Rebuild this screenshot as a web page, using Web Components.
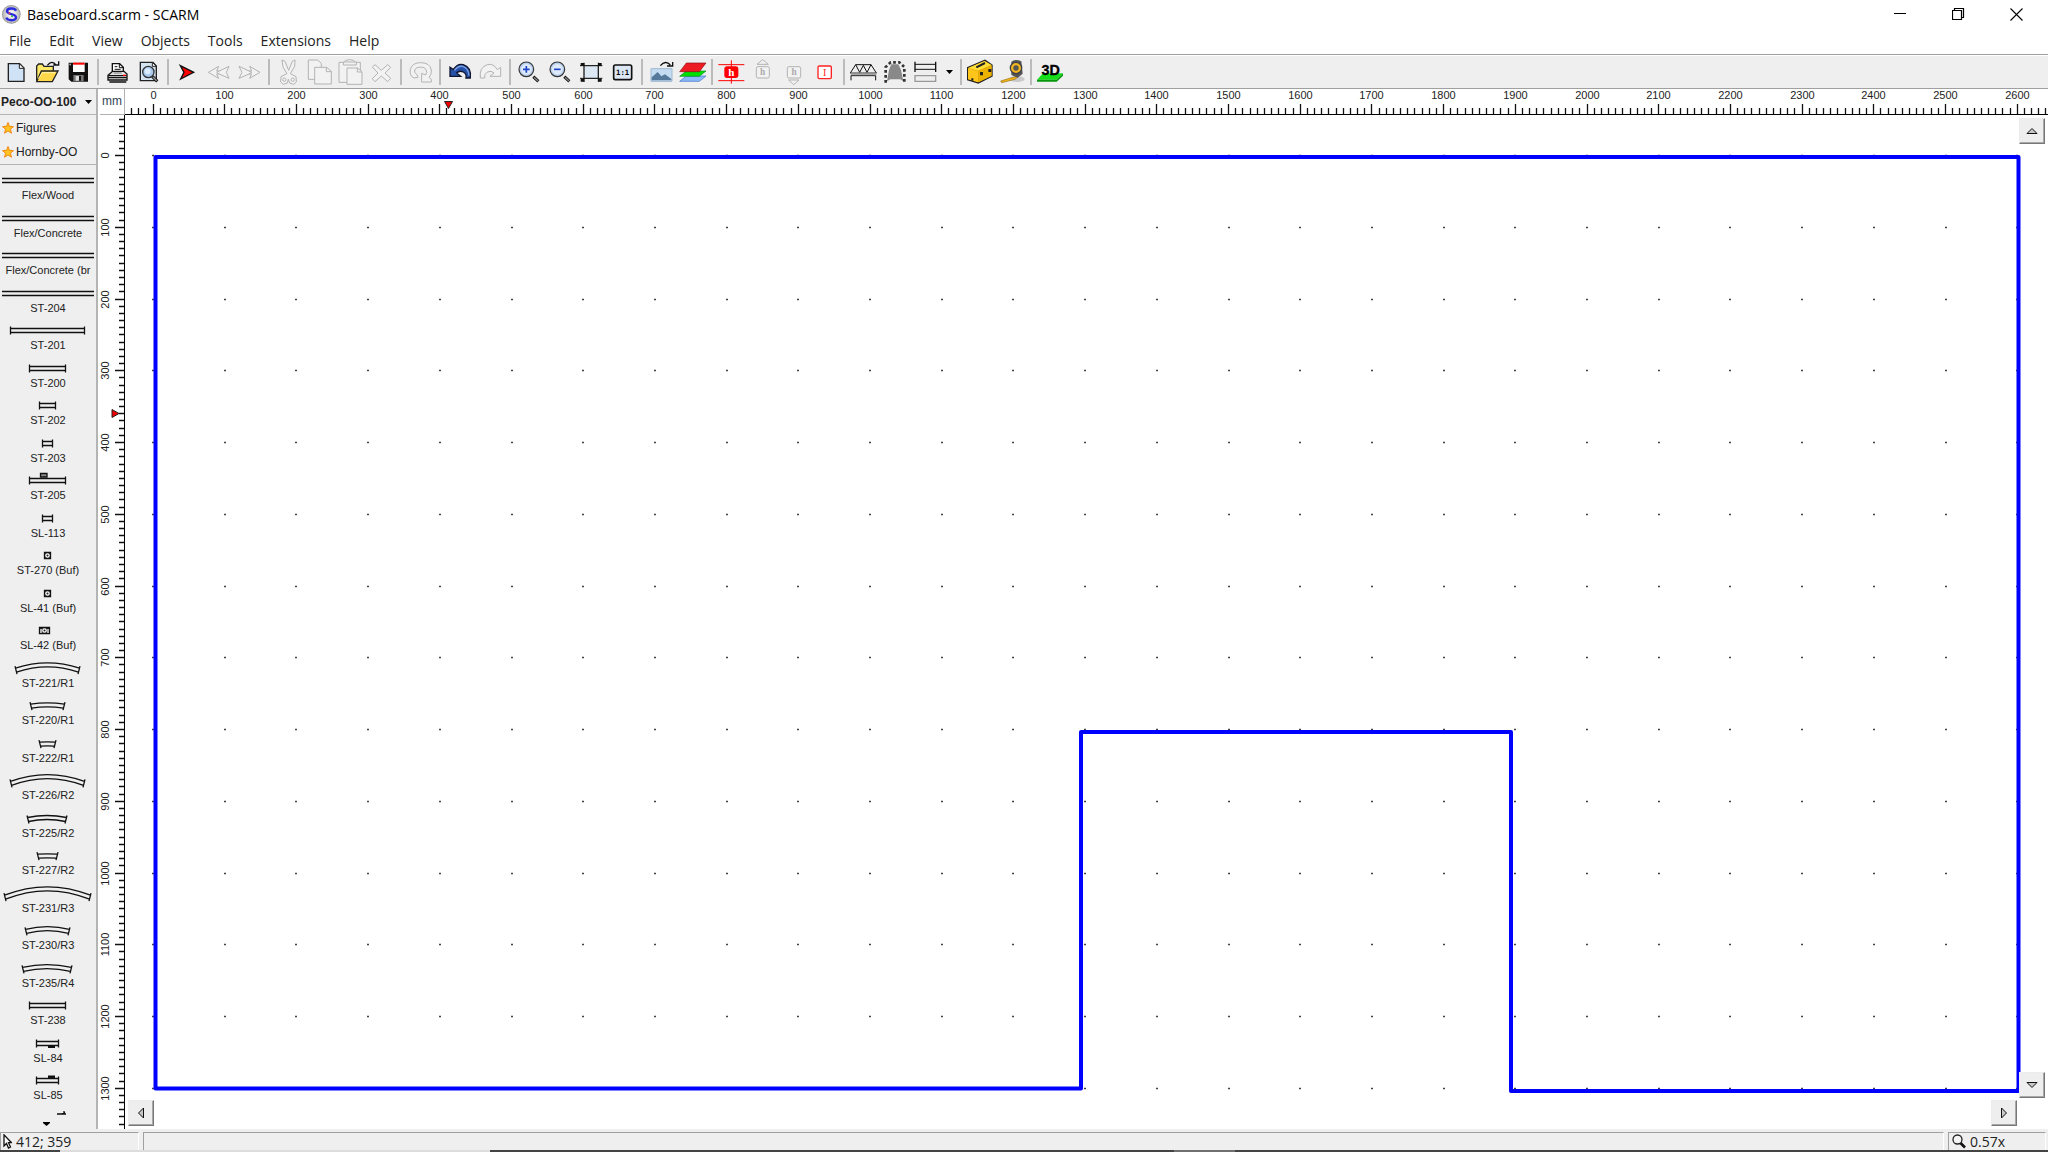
<!DOCTYPE html>
<html lang="en">
<head>
<meta charset="utf-8">
<title>Baseboard.scarm - SCARM</title>
<style>
html,body{height:100%;margin:0}
body{background:#fff;color:#111;font-family:"Open Sans","Noto Sans",sans-serif;font-size:14px;overflow:hidden}
</style>
</head>
<body>
<scarm-app></scarm-app>
<script>
const define = (name, html, setup) => customElements.define(name, class extends HTMLElement {
  connectedCallback() {
    if (this.shadowRoot) return;
    const t = document.createElement('template');
    t.innerHTML = typeof html === 'function' ? html(this) : html;
    this.attachShadow({ mode: 'open' }).append(t.content.cloneNode(true));
    if (setup) setup(this, this.shadowRoot);
  }
});

/* Title bar */
define('title-bar', `
<style>
:host{display:flex;align-items:center;height:28px;flex:none;background:#fff;font-size:14px;color:#000}
.logo{width:19px;height:19px;margin:0 6px 0 2px}
h1{font:inherit;margin:0;flex:1}
button{width:58px;height:28px;border:0;background:none;padding:0;display:grid;place-items:center}
.controls{display:flex;padding-right:3px}
</style>
<svg class="logo" viewBox="0 0 57 57"><defs><radialGradient id="g"><stop offset=".3" stop-color="#eee"/><stop offset=".85" stop-color="#bcbcbc"/><stop offset="1" stop-color="#888"/></radialGradient></defs>
<circle cx="28" cy="28" r="28" fill="url(#g)"/><path d="M42 17C38 8 15 8 15 19C15 30 42 24 42 37C42 49 17 48 13 38" fill="none" stroke="#2a2ae0" stroke-width="7"/><circle cx="22" cy="25" r="3" fill="#e44"/><circle cx="30" cy="34" r="3" fill="#3b3"/></svg>
<h1>Baseboard.scarm - SCARM</h1>
<div class="controls">
<button aria-label="Minimize"><svg width="13" height="13"><path d="M0 5.500H12" stroke="#000"/></svg></button>
<button aria-label="Restore"><svg width="13" height="13"><path d="M.5 2.500H9.500V11.500H.5ZM2.500 2.500V.5H11.500V9.500H9.500" fill="none" stroke="#000" stroke-width="1.200"/></svg></button>
<button aria-label="Close"><svg width="13" height="13"><path d="M.5 .5L12.500 12.500M12.500 .5L.5 12.500" stroke="#000" stroke-width="1.100"/></svg></button>
</div>`);

define('menu-bar', `
<style>
:host{display:block;height:26px;flex:none;background:#fff}
nav{display:flex;gap:18px;padding-left:9px}
button{border:0;background:none;padding:0;font:inherit;font-size:14px;line-height:26px;color:#222}
</style>
<nav>${['File','Edit','View','Objects','Tools','Extensions','Help'].map(m => `<button>${m}</button>`).join('')}</nav>`);

/* Toolbar glyphs: [name, viewBox x, viewBox y, markup]; three units per pixel */
const OFF = 'fill="#f2f2f2" stroke="#b3b3b3" stroke-width="3"';
const lens = s => `<path d="M402 80L417 94" stroke="#111" stroke-width="9"/><path d="M404 82L416 93" stroke="#888" stroke-width="4"/><circle cx="381" cy="58" r="22" fill="#b9cfee" stroke="#333" stroke-width="3.500"/><circle cx="381" cy="58" r="16" fill="#dfeafa"/><path d="${s}" stroke="#1e46c8" stroke-width="5" fill="none"/>`;
const tools = [
 ['New',1,165,`<path d="M23 191H57L70 204V244H23Z" fill="#cfe2f6" stroke="#222" stroke-width="4"/><path d="M56 191V205H70Z" fill="#fff" stroke="#222" stroke-width="3"/>`],
 ['Open',94,165,`<path d="M108 242V198L114 192H125L130 199H158V212" fill="#ffe96b" stroke="#222" stroke-width="4"/><path d="M108 245L122 213H172L155 245Z" fill="#ffd84a" stroke="#222" stroke-width="4"/><path d="M113 236L125 218H164" fill="none" stroke="#fff6b0" stroke-width="3"/><path d="M140 196Q154 178 167 196M158 195H174V184" fill="none" stroke="#111" stroke-width="4"/>`],
 ['Save',188,165,`<path d="M205 188H263V245H213L205 238Z" fill="#111"/><path d="M218 188H253V216H218Z" fill="#fff"/><path d="M218 188H253V194H218Z" fill="#f00"/><path d="M219 225H250V244H219Z" fill="#777"/><path d="M226 228H236V242H226Z" fill="#ddd"/><path d="M236 228H242V242H236Z" fill="#111"/><path d="M207 191H212V196H207Z" fill="#aaa"/>`],
 '|',
 ['Print',306,165,`<path d="M337 216V191H359L370 202V218" fill="#fff" stroke="#111" stroke-width="4"/><path d="M358 190V203H370M344 200H352M344 208H362" fill="none" stroke="#111" stroke-width="3"/><path d="M324 226L338 214H372L381 222V240H324Z" fill="#e2e2e2" stroke="#111" stroke-width="4"/><path d="M325 227H380M324 233H380M328 246H379" stroke="#111" stroke-width="4"/><path d="M341 219H365" stroke="#777" stroke-width="3"/><path d="M369 226H377" stroke="#f00" stroke-width="4"/>`],
 ['Print preview',400,165,`<path d="M422 187H460L470 198V242H422Z" fill="#d6e3f0" stroke="#222" stroke-width="4"/><path d="M458 187V199H470Z" fill="#fff" stroke="#222" stroke-width="3"/><path d="M458 229L473 244" stroke="#111" stroke-width="9"/><path d="M460 231L471 242" stroke="#999" stroke-width="4"/><circle cx="446" cy="216" r="17" fill="#a9c8ec" stroke="#333" stroke-width="4"/><circle cx="444" cy="214" r="9" fill="#dcecff"/>`],
 '|',
 ['Start',515,165,`<path d="M540 197L580 217L541 237L551 217Z" fill="#f00" stroke="#111" stroke-width="4"/>`],
 ['Previous',609,165,`<path d="M656 199L625 217L656 235L650 222H658L687 235L679 217L687 199L658 213H650Z" ${OFF}/><path d="M658 213L650 217L658 222" fill="none" stroke="#b3b3b3" stroke-width="3"/>`],
 ['Next',702,165,`<path d="M749 199L780 217L749 235L755 222H747L717 235L726 217L717 199L747 213H755Z" ${OFF}/><path d="M747 213L755 217L747 222" fill="none" stroke="#b3b3b3" stroke-width="3"/>`],
 '|',
 ['Cut',818,165,`<path d="M845 180L848 201L860 221L842 230L841 246L849 253L861 249L864 238L868 249L880 253L888 246L887 230L870 221L883 199L884 180L876 184L865 211L854 184Z" ${OFF}/><circle cx="852" cy="239" r="5" ${OFF}/><circle cx="877" cy="239" r="5" ${OFF}/>`],
 ['Copy',911,165,`<path d="M924 180H952L963 190V238H924Z" ${OFF}/><path d="M943 202H979L993 214V252H943Z" ${OFF}/><path d="M978 202V215H993" fill="none" stroke="#b3b3b3" stroke-width="3"/>`],
 ['Paste',1006,165,`<path d="M1018 187H1032Q1036 179 1050 179Q1064 179 1068 187H1082V247H1018Z" ${OFF}/><path d="M1031 186H1070V195H1031Z" ${OFF}/><path d="M1042 204H1074L1087 215V253H1042Z" ${OFF}/><path d="M1073 204V216H1087" fill="none" stroke="#b3b3b3" stroke-width="3"/>`],
 ['Delete',1099,165,`<path d="M1118 201L1126 194L1145 211L1164 194L1173 202L1156 219L1173 235L1164 245L1145 228L1126 245L1118 236L1135 219Z" ${OFF}/>`],
 '|',
 ['Rotate',16,15,`<path d="M43 84Q29 78 32 58Q38 38 63 38Q91 38 95 60Q96 74 88 82L95 88V96H66V70L78 75Q84 68 79 58Q74 51 63 51Q48 51 45 60Q42 68 52 74L55 82Z" ${OFF}/>`],
 '|',
 ['Undo',130,15,`<path d="M148 52V79H180L168 69Q176 60 188 66Q199 72 196 84H209Q213 52 188 44Q170 39 158 59Z" fill="#2552a8" stroke="#10152c" stroke-width="4"/><path d="M161 61Q172 47 186 49Q204 55 205 77" fill="none" stroke="#7da0e4" stroke-width="4"/>`],
 ['Redo',226,15,`<path d="M303 52V79H271L283 69Q275 60 263 66Q252 72 255 84H242Q238 52 263 44Q281 39 293 59Z" ${OFF}/>`],
 '|',
 ['Zoom in',344,15,lens('M371 58H391M381 48V68')],
 ['Zoom out',344,15,lens('M371 58H391')],
 ['Fit',530,15,`<path d="M554 47H597V85H554Z" fill="#dce7f4" stroke="#222" stroke-width="4"/><path d="M542 47H554V38M609 47H597V38M542 85H554V96M609 85H597V96" fill="none" stroke="#111" stroke-width="3"/><path d="M544 39H555V48H544ZM596 39H607V48H596ZM544 86H555V95H544ZM596 86H607V95H596Z" fill="#111"/>`],
 ['Actual size',623,15,`<rect x="643" y="45" width="54" height="44" rx="5" fill="#dbe7f5" stroke="#111" stroke-width="5"/><text x="670" y="75" text-anchor="middle" font-family="DejaVu Sans Mono" font-weight="bold" font-size="22">1:1</text>`],
 '|',
 ['Background',740,15,`<path d="M755 56H818V94H755Z" fill="#c3dcf2" stroke="#9fb8cf" stroke-width="3"/><path d="M757 91V82L775 66L786 79L797 73L816 87V91Z" fill="#55799a"/><path d="M783 47Q799 29 813 45M803 48H820V36" fill="none" stroke="#111" stroke-width="4"/>`],
 ['Layers',833,15,`<path d="M841 94L861 78H920L900 94Z" fill="#8db8fa" stroke="#3670c8" stroke-width="2"/><path d="M841 79L861 63H920L900 79Z" fill="#00e000" stroke="#008c20" stroke-width="2"/><path d="M841 65L861 39H920L900 65Z" fill="#ed1c24" stroke="#8d1118" stroke-width="2"/>`],
 '|',
 ['Height',950,15,`<path d="M957 44H1035M957 92H1035M996 31V101" stroke="#f00" stroke-width="3"/><rect x="975" y="49" width="42" height="35" rx="8" fill="#f00"/><text x="996" y="77" text-anchor="middle" fill="#fff" font-family="Liberation Serif" font-weight="bold" font-size="33">h</text>`],
 ['Raise',1043,15,`<path d="M1073 43L1090 29L1107 43Z" ${OFF}/><rect x="1071" y="50" width="39" height="34" rx="5" ${OFF}/><text x="1090" y="76" text-anchor="middle" fill="#aaa" font-family="Liberation Serif" font-weight="bold" font-size="28">h</text>`],
 ['Lower',-4,15,`<path d="M28 90L43 104L59 90Z" ${OFF}/><rect x="24" y="50" width="40" height="34" rx="5" ${OFF}/><text x="44" y="76" text-anchor="middle" fill="#aaa" font-family="Liberation Serif" font-weight="bold" font-size="28">h</text>`],
 ['Slope',91,15,`<rect x="118" y="48" width="40" height="38" rx="4" fill="#fff" stroke="#f22" stroke-width="4"/><text x="138" y="77" text-anchor="middle" fill="#f22" font-family="Liberation Serif" font-size="30">I</text>`],
 '|',
 ['Bridge',208,15,`<path d="M217 91V77H291V91M215 69L231 44H277L293 69M231 44L243 67L254 46L265 67L277 44" fill="none" stroke="#111" stroke-width="3"/><path d="M214 69H294" stroke="#333" stroke-width="3"/><path d="M216 74H293" stroke="#999" stroke-width="3"/>`],
 ['Tunnel',301,15,`<path d="M325 94L331 60L338 43H359L367 60L374 94L365 88H335Z" fill="#898989"/><path d="M321 98V51L336 37H362L377 51V98" fill="none" stroke="#333" stroke-width="8" stroke-dasharray="8 7"/>`],
 ['Track',395,15,`<path d="M410 43H472M410 58H472" stroke="#111" stroke-width="3"/><path d="M410 35V66M472 35V66" stroke="#111" stroke-width="4"/><path d="M410 77H472V94H410Z" fill="#eee" stroke="#999" stroke-width="4"/>`],
 'v','|',
 ['Toolbox',554,15,`<path d="M562 53L614 31L635 45V78L594 99L562 89Z" fill="#d49a00" stroke="#222" stroke-width="4"/><path d="M563 54L612 33L634 45L593 62Z" fill="#ffdf38"/><path d="M563 55L593 64V97L563 88Z" fill="#ffc51b"/><path d="M588 52L614 39" stroke="#222" stroke-width="6"/><path d="M594 64L634 46V77L594 97Z" fill="#ecb200"/><path d="M599 66H608V76H599ZM624 57H633V66H624ZM573 85H579V92H573Z" fill="#222"/>`],
 ['Measure',647,15,`<ellipse cx="710" cy="87" rx="23" ry="9" fill="#c9c9c9"/><path d="M716 78L690 84L661 93L664 98L704 88Z" fill="#f5b315" stroke="#91711b" stroke-width="2"/><path d="M693 35Q704 25 723 34L727 71L712 83L693 75Z" fill="#555"/><circle cx="707" cy="54" r="17" fill="#f2b51e" stroke="#3e4145" stroke-width="4"/><circle cx="707" cy="54" r="8" fill="#555"/>`],
 '|',
 ['3D view',764,15,`<path d="M770 89L788 70H848L829 89Z" fill="#15df18"/><path d="M770 89H829L848 70V77L829 95H770Z" fill="#07960b"/><text x="811" y="76" text-anchor="middle" font-family="Liberation Sans" font-weight="bold" font-size="43" stroke="#000" stroke-width="1">3D</text>`]
];
define('tool-bar', `
<style>
:host{display:flex;flex:none;height:33px;padding-left:1px;background:#efefef;border-top:1px solid #a0a0a0;border-bottom:1px solid #a0a0a0;box-shadow:inset 0 1px #fff}
button{border:0;background:none;padding:0;width:31px;height:33px;flex:none}
button svg{display:block}
.more{width:16px;display:grid;place-items:center}
i{width:2px;height:26px;margin:4px 3px 0;background:#bbb;flex:none}
</style>
${tools.map(t => t === '|' ? '<i></i>' : t === 'v' ? '<button class="more" aria-label="More track options"><svg width="7" height="4"><path d="M0 0H7L3.500 4Z"/></svg></button>'
 : `<button aria-label="${t[0]}"><svg width="31" height="33" viewBox="${t[1]} ${t[2]} 93 99">${t[3]}</svg></button>`).join('')}`);

/* Track pieces */
const straight = (a, b) => `<path d="M${a} 5.500H${b}M${a} 9.500H${b}M${a} 3.500V11.500M${b} 3.500V11.500"/>`;
const curve = (a, b, y, s) => { const m = (a + b) / 2;
  return `<path d="M${a} ${y+s}Q${m} ${y-3*s} ${b} ${y+s}M${a+1} ${y+s+4}Q${m} ${y+4-3*s} ${b-1} ${y+s+4}M${a-.5} ${y+s-2}L${a+1.5} ${y+s+6}M${b+.5} ${y+s-2}L${b-1.5} ${y+s+6}"/>`; };
const flex = '<path d="M2 5.500H94M2 9.500H94"/>';
const buffer = (a, b) => `<path d="M${a} 4.500H${b}V10.500H${a}Z" fill="#222"/><circle cx="${(a+b)/2}" cy="7.500" r="1.700" stroke="#fff" fill="#222"/>`;
const pieces = [
 ['Flex/Wood',flex],['Flex/Concrete',flex],['Flex/Concrete (br',flex],['ST-204',flex],
 ['ST-201',straight(10.5,84.5)],['ST-200',straight(29.5,65.5)],['ST-202',straight(39.5,55.5)],['ST-203',straight(42.5,52.5)],
 ['ST-205',straight(29.5,65.5)+'<path d="M40.500 0.500H47V4H40.500Z" fill="#888"/>'],['SL-113',straight(42.5,52.5)],
 ['ST-270 (Buf)',buffer(44.5,50.5)],['SL-41 (Buf)',buffer(44.5,50.5)],['SL-42 (Buf)',buffer(39.5,49.5)+'<path d="M41 6V10M48 6V10" stroke="#fff"/>'],
 ['ST-221/R1',curve(15.5,79.5,4.5,2.6)],['ST-220/R1',curve(30.5,64.5,5.5,.7)],['ST-222/R1',curve(39.5,55.5,6,.2)],
 ['ST-226/R2',curve(10.5,84.5,5,3.4)],['ST-225/R2',curve(27.5,66.5,5.5,1)],['ST-227/R2',curve(37.5,57.5,6,.2)],
 ['ST-231/R3',curve(4.5,90.5,5,4.2)],['ST-230/R3',curve(25.5,69.5,5,1.3)],['ST-235/R4',curve(22.5,71.5,5,1.3)],
 ['ST-238',straight(29.5,65.5)],['SL-84',straight(36.5,58.5)+'<path d="M48 10.500H55" stroke-width="3"/>'],['SL-85',straight(36.5,58.5)+'<path d="M48 4H55" stroke-width="3"/>']
];
define('track-piece', el => `
<style>
:host{display:block;flex:1 1 0;min-height:0;font-size:11px;line-height:16px}
svg{display:block;overflow:visible;fill:none;stroke:#111;stroke-width:1.3}
span{display:block;white-space:nowrap;overflow:hidden;margin:0 2px;text-align:center}
</style>
<svg width="96" height="14">${pieces[el.dataset.piece][1]}</svg><span><slot></slot></span>`);

define('track-library', `
<style>
:host{display:flex;flex-direction:column;width:96px;flex:none;background:#efefef;border-right:2px solid #b4b4b4;font:11px "Liberation Sans",sans-serif;color:#222;min-height:0}
.pick{display:grid;grid-template-columns:1fr;height:25px;align-items:center;border-bottom:1px solid #b4b4b4}
select{appearance:none;border:0;width:96px;height:25px;padding:0 0 0 1px;font:bold 12px "Liberation Sans",sans-serif;color:#222;background:none;grid-area:1/1}
.pick svg{grid-area:1/1;justify-self:end;margin-right:4px;pointer-events:none}
ul{list-style:none;margin:0;padding:1px 0 0;border-bottom:1px solid #b4b4b4}
li{display:flex;align-items:center;height:24px;gap:2px;padding-left:2px;font-size:12px}
.pieces{display:flex;flex-direction:column;flex:1;min-height:0;padding-top:8px}
.down{border:0;background:none;padding:0;height:18px;flex:none;display:block}
.down svg{display:block}
</style>
<div class="pick"><select aria-label="Track library"><option>Peco-OO-100</option></select><svg width="7" height="4"><path d="M0 0H7L3.500 4Z"/></svg></div>
<ul>${['Figures','Hornby-OO'].map(n => `<li><svg width="12" height="12" viewBox="0 0 12 12"><path d="M6 .5L7.500 4.300L11.500 4.600L8.500 7.200L9.500 11.300L6 9L2.500 11.300L3.500 7.200L.5 4.600L4.500 4.300Z" fill="#ffc020" stroke="#f08a18"/></svg>${n}</li>`).join('')}</ul>
<div class="pieces">${pieces.map((p, i) => `<track-piece data-piece="${i}">${p[0]}</track-piece>`).join('')}</div>
<button class="down" aria-label="More pieces"><svg width="96" height="18"><path d="M57 3H61L65 1.500M61 3H66M64 0V3" fill="none" stroke="#111" stroke-width="1.300"/><path d="M43 11H50V12L46.500 15L43 12Z"/></svg></button>`);

/* Rulers */
const SCALE = 71.7, SCALE_V = 71.75;
define('mm-ruler', el => {
  const v = el.hasAttribute('vertical'), zero = v ? 41 : 28.5, step = (v ? SCALE_V : SCALE) / 10;
  const count = v ? 136 : 270;
  let d = '', labels = '';
  for (let i = v ? -5 : -3; i < count; i++) {
    const p = Math.round(zero + i * step) - .5, major = i >= 0 && i % 10 === 0, a = major ? 15 : 19;
    d += v ? `M${a} ${p}H25` : `M${p} ${a}V26`;
    if (major) labels += v
      ? `<text transform="translate(9 ${p}) rotate(-90)" text-anchor="middle">${i * 10}</text>`
      : `<text x="${p}" y="10" text-anchor="middle">${i * 10}</text>`;
  }
  return `
<style>
:host{display:block;background:#fff;overflow:hidden;min-width:0;min-height:0;font:11px "Liberation Sans",sans-serif;${v ? 'border-right:1px solid #000' : 'border-bottom:1px solid #000'}}
svg{display:block;width:100%;height:100%}
text{fill:#222}
</style>
<svg>${labels}<path d="${d}" stroke="#111" stroke-width="1.300"/>${v
    ? '<path d="M12 294.500V302.500L19 298.500Z" fill="#e00" stroke="#222"/>'
    : '<path d="M319.500 12.500H327.500L323.500 19.500Z" fill="#e00" stroke="#222"/>'}</svg>`;
});

/* Drawing area */
define('plan-canvas', () => {
  let dots = '';
  for (let y = 0; y <= 13; y++) for (let x = 0; x <= 26; x++)
    dots += `M${Math.round(27 + x * SCALE)} ${Math.round(40 + y * SCALE_V) + .5}h2`;
  const btn = (c, n, d) => `<button class="${c}" aria-label="${n}"><svg width="12" height="12" viewBox="0 0 12 12"><path d="${d}" fill="#c8c8c8" stroke="#111"/></svg></button>`;
  return `
<style>
:host{display:block;position:relative;background:#fff;overflow:hidden;min-width:0;min-height:0}
.plan{display:block;width:100%;height:100%}
button{position:absolute;width:26px;height:26px;padding:0;display:grid;place-items:center;background:#eee;border:1px solid;border-color:#ececec #777 #777 #ececec;box-shadow:inset -1px -1px #a8a8a8}
.up{right:3px;top:3px}.down{right:3px;bottom:31px}.left{left:3px;bottom:3px}.right{right:31px;bottom:3px}
</style>
<svg class="plan"><path d="${dots}" stroke="#444" stroke-width="1.500"/>
<path d="M30.500 42H1893.500V976H1386V617H956V973.500H30.500Z" fill="none" stroke="#00f" stroke-width="4" stroke-linejoin="round"/></svg>
${btn('up','Scroll up','M1 8.500L6 3.500L11 8.500Z')}${btn('down','Scroll down','M1 3.500H11L6 8.500Z')}${btn('left','Scroll left','M8.500 1V11L3.500 6Z')}${btn('right','Scroll right','M3.500 1V11L8.500 6Z')}`;
});

define('plan-view', `
<style>
:host{display:grid;flex:1;min-width:0;min-height:0;grid-template-columns:25px 1fr;grid-template-rows:26px 1fr;padding-left:2px;background:#fff}
.unit{border-right:1px solid #b0b0b0;border-bottom:1px solid #b0b0b0;font:12px/25px "Liberation Sans",sans-serif;color:#345;text-align:center}
</style>
<div class="unit">mm</div><mm-ruler></mm-ruler><mm-ruler vertical></mm-ruler><plan-canvas></plan-canvas>`);

define('status-bar', `
<style>
:host{display:flex;flex:none;gap:4px;height:18px;padding:3px 2px 0 0;background:#efefef;color:#222;font-size:14px;line-height:17px}
div{display:flex;align-items:center;gap:4px;border-top:1px solid #a0a0a0;border-left:1px solid #a0a0a0;border-right:1px solid #fff;box-sizing:border-box;height:18px}
.pos{width:139px}.msg{flex:1}.zoom{width:98px;padding-left:3px}
</style>
<div class="pos"><svg width="11" height="15" viewBox="0 0 11 15"><path d="M3 .8V12L5.500 9.500L7.500 14L9.500 13L7.500 8.700H10.500Z" fill="#fff" stroke="#111" stroke-width="1.300"/></svg>412; 359</div>
<div class="msg"></div>
<div class="zoom"><svg width="14" height="15" viewBox="0 0 14 15"><circle cx="5.500" cy="5.500" r="4.500" fill="#f4f4f4" stroke="#222" stroke-width="1.300"/><path d="M8.500 9L13 13.500" stroke="#111" stroke-width="2.600"/></svg>0.57x</div>`);

define('scarm-app', `
<style>
:host{display:flex;flex-direction:column;height:100vh}
main{display:flex;flex:1;min-height:0}
footer{display:flex;height:2px;flex:none;background:#444}
footer i{background:#ddd;width:430px;margin-left:60px}
footer b{background:#707070;width:61px;margin-left:684px}
</style>
<title-bar></title-bar><menu-bar></menu-bar><tool-bar></tool-bar>
<main><track-library></track-library><plan-view></plan-view></main>
<status-bar></status-bar><footer><i></i><b></b></footer>`);
</script>
</body>
</html>
